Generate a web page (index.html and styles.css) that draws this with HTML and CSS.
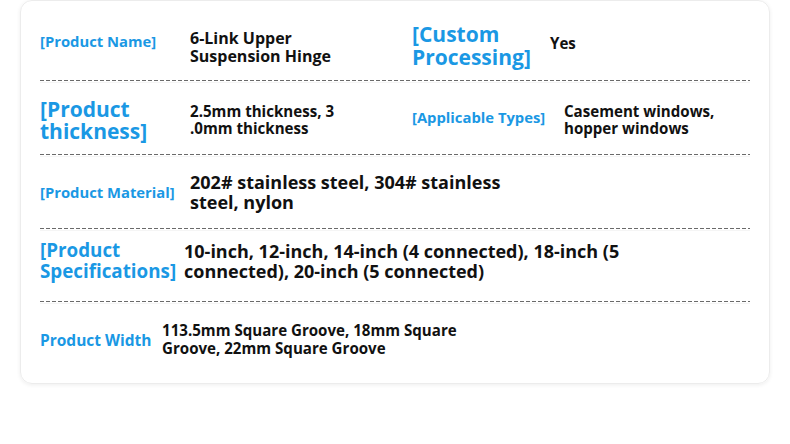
FILE: index.html
```html
<!DOCTYPE html>
<html>
<head>
<meta charset="utf-8">
<link rel="stylesheet" href="styles.css">
</head>
<body>
<div class="card">
  <div class="row row-1">
    <div class="label w150 sm up-xs">[Product Name]</div>
    <div class="value w222 v16 down">6-Link Upper<br>Suspension Hinge</div>
    <div class="label w138 lg down-sm">[Custom<br>Processing]</div>
    <div class="value v15 yes">Yes</div>
  </div>
  <div class="sep"></div>
  <div class="row row-2">
    <div class="label w150 lg">[Product<br>thickness]</div>
    <div class="value w222 v15">2.5mm thickness, 3<br>.0mm thickness</div>
    <div class="label w152 sm up">[Applicable Types]</div>
    <div class="value v15">Casement windows,<br>hopper windows</div>
  </div>
  <div class="sep"></div>
  <div class="row row-3">
    <div class="label w150 sm">[Product Material]</div>
    <div class="value v18">202# stainless steel, 304# stainless<br>steel, nylon</div>
  </div>
  <div class="sep"></div>
  <div class="row row-4">
    <div class="label w144 md">[Product<br>Specifications]</div>
    <div class="value v18">10-inch, 12-inch, 14-inch (4 connected), 18-inch (5<br>connected), 20-inch (5 connected)</div>
  </div>
  <div class="sep"></div>
  <div class="row row-5">
    <div class="label w122 plain">Product Width</div>
    <div class="value v15">113.5mm Square Groove, 18mm Square<br>Groove, 22mm Square Groove</div>
  </div>
</div>
</body>
</html>
```
FILE: styles.css
```css
html, body {
  margin: 0;
  padding: 0;
  background: #ffffff;
}
body {
  font-family: "Open Sans", "Noto Sans", sans-serif;
  width: 790px;
  height: 444px;
  overflow: hidden;
}
.card {
  margin-left: 20px;
  width: 750px;
  height: 384px;
  box-sizing: border-box;
  padding: 0 19px;
  border: 1px solid #ececec;
  border-radius: 12px;
  box-shadow: 0 1px 4px rgba(0, 0, 0, 0.07);
  display: flex;
  flex-direction: column;
}
.row {
  display: flex;
  align-items: center;
  white-space: nowrap;
  box-sizing: border-box;
}
.row-1 { height: 79px; padding-top: 4px; }
.row-2 { height: 73px; padding-top: 5px; }
.row-3 { height: 73px; }
.row-4 { height: 72px; padding-bottom: 8px; }
.row-5 { height: 81px; padding-bottom: 6px; }
.sep {
  height: 1px;
  flex: none;
  background: repeating-linear-gradient(to right, #6a6a6a 0 4px, transparent 4px 6px);
  box-shadow: 0 2px 0 rgba(0, 0, 0, 0.04);
}
.label {
  color: #1a98e4;
  font-weight: 700;
  flex: none;
}
.label.sm { font-size: 14.8px; line-height: 18px; }
.label.lg { font-size: 21px; line-height: 22.5px; }
.label.md { font-size: 18.8px; line-height: 21px; }
.label.plain { font-size: 15.5px; line-height: 18px; }
.w150 { width: 150px; }
.w138 { width: 138px; }
.w152 { width: 152px; }
.w144 { width: 144px; }
.w122 { width: 122px; }
.w222 { width: 222px; }
.value {
  color: #111111;
  font-weight: 700;
  flex: none;
}
.v15 { font-size: 15.1px; line-height: 17.5px; }
.v16 { font-size: 16px; line-height: 18px; }
.v18 { font-size: 18px; line-height: 20px; }
.down { margin-top: 8px; }
.down-sm { margin-top: 6px; }
.up { margin-top: -6px; }
.up-xs { margin-top: -4px; }
.yes { margin-top: 2px; }
```
